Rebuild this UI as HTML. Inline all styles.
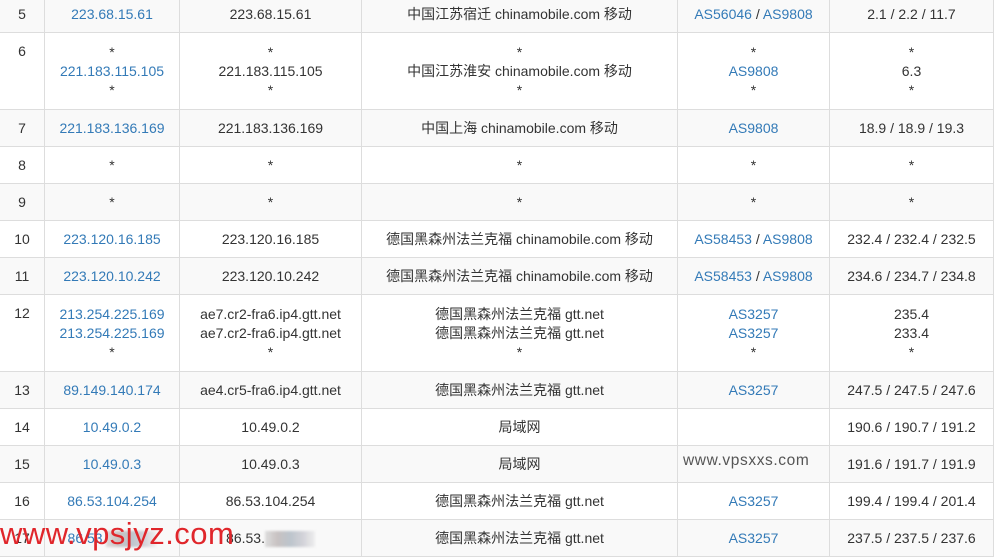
<!DOCTYPE html>
<html><head><meta charset="utf-8"><style>
*{margin:0;padding:0;box-sizing:border-box}
body{width:994px;height:553px;overflow:hidden;background:#fff;font-family:"Liberation Sans","Noto Sans CJK SC",sans-serif;font-size:14px;color:#333;position:relative}
.r{position:absolute;left:0;width:994px;border-bottom:1px solid #ddd}
.g{background:#f9f9f9}
.c{position:absolute;top:0;bottom:0;display:flex;flex-direction:column;justify-content:center;align-items:center;text-align:center;line-height:19px;border-right:1px solid #ddd;white-space:nowrap}
.c1{left:0;width:45px}.c2{left:45px;width:135px}.c3{left:180px;width:182px}.c4{left:362px;width:316px}.c5{left:678px;width:152px}.c6{left:830px;width:164px}
a{color:#337ab7;text-decoration:none}
.wm{position:absolute;left:0;top:516px;font-size:31px;color:#e0262b;font-family:"Liberation Sans",sans-serif;letter-spacing:0.5px}
.wm2{position:absolute;left:683px;top:452px;font-size:15.5px;color:#555;letter-spacing:0.6px}
.blur{display:inline-block;width:50px;height:16px;background:linear-gradient(90deg,#ddd,#c8c2c2,#bcc4cc,#d2d2d8,#eee);vertical-align:middle;filter:blur(1px)}
</style></head><body>
<div class="r g" style="top:-3px;height:36px"><div class="c c1">5</div><div class="c c2"><a>223.68.15.61</a></div><div class="c c3">223.68.15.61</div><div class="c c4">中国江苏宿迁 chinamobile.com 移动</div><div class="c c5"><span><a>AS56046</a> / <a>AS9808</a></span></div><div class="c c6">2.1 / 2.2 / 11.7</div></div>
<div class="r" style="top:33px;height:77px"><div class="c c1" style="justify-content:flex-start;padding-top:9px">6</div><div class="c c2"><span>*</span><a>221.183.115.105</a><span>*</span></div><div class="c c3"><span>*</span><span>221.183.115.105</span><span>*</span></div><div class="c c4"><span>*</span><span>中国江苏淮安 chinamobile.com 移动</span><span>*</span></div><div class="c c5"><span>*</span><a>AS9808</a><span>*</span></div><div class="c c6"><span>*</span><span>6.3</span><span>*</span></div></div>
<div class="r g" style="top:110px;height:37px"><div class="c c1">7</div><div class="c c2"><a>221.183.136.169</a></div><div class="c c3">221.183.136.169</div><div class="c c4">中国上海 chinamobile.com 移动</div><div class="c c5"><a>AS9808</a></div><div class="c c6">18.9 / 18.9 / 19.3</div></div>
<div class="r" style="top:147px;height:37px"><div class="c c1">8</div><div class="c c2">*</div><div class="c c3">*</div><div class="c c4">*</div><div class="c c5">*</div><div class="c c6">*</div></div>
<div class="r g" style="top:184px;height:37px"><div class="c c1">9</div><div class="c c2">*</div><div class="c c3">*</div><div class="c c4">*</div><div class="c c5">*</div><div class="c c6">*</div></div>
<div class="r" style="top:221px;height:37px"><div class="c c1">10</div><div class="c c2"><a>223.120.16.185</a></div><div class="c c3">223.120.16.185</div><div class="c c4">德国黑森州法兰克福 chinamobile.com 移动</div><div class="c c5"><span><a>AS58453</a> / <a>AS9808</a></span></div><div class="c c6">232.4 / 232.4 / 232.5</div></div>
<div class="r g" style="top:258px;height:37px"><div class="c c1">11</div><div class="c c2"><a>223.120.10.242</a></div><div class="c c3">223.120.10.242</div><div class="c c4">德国黑森州法兰克福 chinamobile.com 移动</div><div class="c c5"><span><a>AS58453</a> / <a>AS9808</a></span></div><div class="c c6">234.6 / 234.7 / 234.8</div></div>
<div class="r" style="top:295px;height:77px"><div class="c c1" style="justify-content:flex-start;padding-top:9px">12</div><div class="c c2"><a>213.254.225.169</a><a>213.254.225.169</a><span>*</span></div><div class="c c3"><span>ae7.cr2-fra6.ip4.gtt.net</span><span>ae7.cr2-fra6.ip4.gtt.net</span><span>*</span></div><div class="c c4"><span>德国黑森州法兰克福 gtt.net</span><span>德国黑森州法兰克福 gtt.net</span><span>*</span></div><div class="c c5"><a>AS3257</a><a>AS3257</a><span>*</span></div><div class="c c6"><span>235.4</span><span>233.4</span><span>*</span></div></div>
<div class="r g" style="top:372px;height:37px"><div class="c c1">13</div><div class="c c2"><a>89.149.140.174</a></div><div class="c c3">ae4.cr5-fra6.ip4.gtt.net</div><div class="c c4">德国黑森州法兰克福 gtt.net</div><div class="c c5"><a>AS3257</a></div><div class="c c6">247.5 / 247.5 / 247.6</div></div>
<div class="r" style="top:409px;height:37px"><div class="c c1">14</div><div class="c c2"><a>10.49.0.2</a></div><div class="c c3">10.49.0.2</div><div class="c c4">局域网</div><div class="c c5"></div><div class="c c6">190.6 / 190.7 / 191.2</div></div>
<div class="r g" style="top:446px;height:37px"><div class="c c1">15</div><div class="c c2"><a>10.49.0.3</a></div><div class="c c3">10.49.0.3</div><div class="c c4">局域网</div><div class="c c5"></div><div class="c c6">191.6 / 191.7 / 191.9</div></div>
<div class="r" style="top:483px;height:37px"><div class="c c1">16</div><div class="c c2"><a>86.53.104.254</a></div><div class="c c3">86.53.104.254</div><div class="c c4">德国黑森州法兰克福 gtt.net</div><div class="c c5"><a>AS3257</a></div><div class="c c6">199.4 / 199.4 / 201.4</div></div>
<div class="r g" style="top:520px;height:37px"><div class="c c1">17</div><div class="c c2"><a>86.53.<span class="blur"></span></a></div><div class="c c3"><span>86.53.<span class="blur"></span></span></div><div class="c c4">德国黑森州法兰克福 gtt.net</div><div class="c c5"><a>AS3257</a></div><div class="c c6">237.5 / 237.5 / 237.6</div></div>
<div class="wm2">www.vpsxxs.com</div>
<div class="wm">www.vpsjyz.com</div>
</body></html>
